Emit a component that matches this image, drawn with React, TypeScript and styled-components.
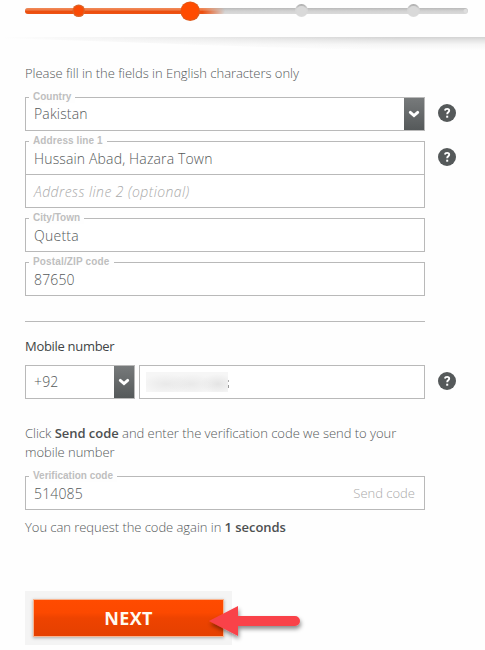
import React from "react";
import styled, { createGlobalStyle } from "styled-components";

const GlobalStyle = createGlobalStyle`
  *, *::before, *::after { box-sizing: border-box; }
  body {
    margin: 0;
    background: #fefefe;
    color: #55595a;
    font-family: "Open Sans", "Noto Sans", sans-serif;
    font-size: 13px;
    font-weight: 300;
  }
`;

const Page = styled.main`
  width: 485px;
  height: 650px;
  overflow: hidden;
`;

const Header = styled.header`
  height: 63px;
  svg { display: block; }
`;

const Form = styled.form`
  display: flex;
  flex-direction: column;
  padding-left: 25px;
`;

const Line = styled.p<{ $top?: number; $spacing?: number }>`
  margin: ${(p) => p.$top ?? 0}px 0 0;
  height: 20px;
  line-height: 20px;
  white-space: nowrap;
  letter-spacing: ${(p) => p.$spacing ?? -0.03}px;
  strong { font-weight: 600; color: #4d5051; }
`;

const SubHeading = styled.h2`
  margin: 14px 0 0;
  height: 20px;
  font-size: 13px;
  line-height: 20px;
  font-weight: 400;
  letter-spacing: -0.3px;
  color: #414546;
`;

const Row = styled.div<{ $top: number }>`
  display: flex;
  align-items: flex-start;
  margin-top: ${(p) => p.$top}px;
`;

const Box = styled.div<{ $width?: number }>`
  position: relative;
  display: flex;
  align-items: center;
  width: ${(p) => p.$width ?? 400}px;
  height: 34px;
  padding-left: 8px;
  border: 1px solid #b9b9b9;
  background: #fff;
  & + & { margin-left: 4px; }
`;

const Stack = styled.div`
  ${Box} + ${Box} { margin: -1px 0 0; }
`;

const Legend = styled.label<{ $spacing?: number }>`
  position: absolute;
  top: -8px;
  left: 3px;
  padding: 0 4px;
  background: #fefefe;
  font: 700 10px/13px "Liberation Sans", Arial, sans-serif;
  letter-spacing: ${(p) => p.$spacing ?? 0}px;
  color: #bfbfbf;
  white-space: nowrap;
`;

const Value = styled.span<{ $spacing?: number; $shift?: number }>`
  flex: 1;
  font-size: 14px;
  line-height: 20px;
  padding-top: ${(p) => p.$shift ?? 1}px;
  letter-spacing: ${(p) => p.$spacing ?? 0.15}px;
  white-space: nowrap;
`;

const Placeholder = styled(Value)`
  font-style: italic;
  color: #aaa;
`;

const DropButton = styled.span`
  display: flex;
  align-items: center;
  justify-content: center;
  width: 20px;
  height: 32px;
  background: linear-gradient(#777a7b, #55595a);
`;

const HelpButton = styled.span`
  display: flex;
  width: 18px;
  height: 18px;
  margin: 7px 0 0 13px;
`;

const SendCode = styled.span`
  padding-right: 9px;
  font-size: 13px;
  color: #aaa;
`;

const Redaction = styled.span`
  display: flex;
  align-items: center;
  justify-content: flex-end;
  width: 82px;
  height: 20px;
  margin-left: -2px;
  background:
    radial-gradient(ellipse 24px 10px at 20px 12px, #e9e9e9, transparent),
    radial-gradient(ellipse 24px 10px at 45px 12px, #e9e9e9, transparent),
    radial-gradient(ellipse 18px 10px at 72px 12px, #e4e4e4, transparent),
    #f6f6f6;
`;

const DigitEdge = styled.span`
  width: 1px;
  height: 8px;
  margin: 3px -1px 0 0;
  background: linear-gradient(#aaa 2px, transparent 2px 5px, #999 5px);
`;

const Divider = styled.hr`
  width: 400px;
  height: 1px;
  margin: 25px 0 0;
  border: 0;
  background: #b9b9b9;
`;

const Action = styled.div`
  position: relative;
  width: 207px;
  height: 54px;
  margin-top: 54px;
  padding: 8px;
  background: #f4f4f4;
`;

const NextButton = styled.button`
  display: block;
  width: 191px;
  height: 38px;
  padding: 0 0 1px;
  border: 1px solid #f9b48f;
  background: linear-gradient(#ff4b00, #fc4900 35%, #ee4300 50%, #e54000);
  box-shadow: 0 1px 3px #aaa;
  color: #fffaf0;
  font: 700 18px/34px "Open Sans", sans-serif;
  letter-spacing: 0.3px;
`;

const Pointer = styled.svg`
  position: absolute;
  left: 182px;
  top: 11px;
`;

function Progress() {
  return (
    <svg width="485" height="56" viewBox="0 0 485 56">
      <defs>
        <linearGradient id="track" x2="0" y2="1">
          <stop offset="0" stopColor="#b9b9b9" />
          <stop offset=".5" stopColor="#d2d2d2" />
          <stop offset="1" stopColor="#dadada" />
        </linearGradient>
        <linearGradient id="done" x2="0" y2="1">
          <stop offset="0" stopColor="#f08a58" />
          <stop offset=".35" stopColor="#ee7742" />
          <stop offset=".6" stopColor="#ec4c0b" />
          <stop offset="1" stopColor="#ee5516" />
        </linearGradient>
        <linearGradient id="fade">
          <stop offset="0" stopColor="#fff" />
          <stop offset=".89" stopColor="#fff" />
          <stop offset="1" stopColor="#000" />
        </linearGradient>
        <mask id="fadeMask"><rect x="20" width="205" height="30" fill="url(#fade)" /></mask>
        <linearGradient id="bump" x2="0" y2="1">
          <stop offset="0" stopColor="#a9a9a9" />
          <stop offset=".35" stopColor="#d4d4d4" />
          <stop offset="1" stopColor="#dcdcdc" />
        </linearGradient>
        <linearGradient id="shade" x2="0" y2="1">
          <stop offset="0" stopColor="#d2d2d2" />
          <stop offset=".2" stopColor="#e3e3e3" />
          <stop offset=".5" stopColor="#f5f5f5" />
          <stop offset=".9" stopColor="#fefefe" />
        </linearGradient>
        <linearGradient id="cover">
          <stop offset="0" stopColor="#fefefe" />
          <stop offset="1" stopColor="#fefefe" stopOpacity="0" />
        </linearGradient>
      </defs>
      <path d="M0 37H485V52Q300 49 150 43L0 38Z" fill="url(#shade)" />
      <rect y="36" width="400" height="18" fill="url(#cover)" />
      <rect x="25" y="8" width="443" height="6" rx="3" fill="url(#track)" />
      <rect x="25" y="8" width="200" height="6" rx="3" fill="url(#done)" mask="url(#fadeMask)" />
      <circle cx="78.7" cy="10.7" r="6.3" fill="#dc6428" />
      <circle cx="78.7" cy="10.7" r="5" fill="#fa4a05" />
      <circle cx="190.2" cy="11.2" r="9.8" fill="#df5a1b" />
      <circle cx="190" cy="11" r="8.8" fill="#ff4b00" />
      <circle cx="301.5" cy="10.5" r="6.5" fill="url(#bump)" />
      <circle cx="301.5" cy="11" r="5" fill="#d9d9d9" />
      <circle cx="413.5" cy="10.5" r="6.5" fill="url(#bump)" />
      <circle cx="413.5" cy="11" r="5" fill="#d9d9d9" />
      <circle cx="465.5" cy="11" r="2" fill="#dedede" />
    </svg>
  );
}

function Drop() {
  return (
    <DropButton>
      <svg width="12" height="8" viewBox="0 0 12 8">
        <path d="M2.3 2.4L6 5.6L9.7 2.4" fill="none" stroke="#fff" strokeWidth="2.9" strokeLinecap="round" />
      </svg>
    </DropButton>
  );
}

function Help() {
  return (
    <HelpButton>
      <svg width="18" height="18" viewBox="0 0 18 18">
        <circle cx="9" cy="9" r="9" fill="#55595a" />
        <path d="M6.8 6.4Q7.2 4.9 9.1 4.9Q11.2 4.9 11.2 6.6Q11.2 7.7 10.1 8.3Q9.2 8.8 9.2 10.2" fill="none" stroke="#fff" strokeWidth="1.9" />
        <rect x="8.2" y="11.7" width="2" height="2" fill="#fff" />
      </svg>
    </HelpButton>
  );
}

export default function App() {
  return (
    <>
      <GlobalStyle />
      <Page>
        <Header><Progress /></Header>
        <Form>
          <Line>Please fill in the fields in English characters only</Line>
          <Row $top={14}>
            <Box>
              <Legend>Country</Legend>
              <Value $shift={0}>Pakistan</Value>
              <Drop />
            </Box>
            <Help />
          </Row>
          <Row $top={10}>
            <Stack>
              <Box>
                <Legend $spacing={0.1}>Address line 1</Legend>
                <Value>Hussain Abad, Hazara Town</Value>
              </Box>
              <Box><Placeholder $spacing={0.42}>Address line 2 (optional)</Placeholder></Box>
            </Stack>
            <Help />
          </Row>
          <Row $top={10}>
            <Box>
              <Legend>City/Town</Legend>
              <Value $spacing={0.25}>Quetta</Value>
            </Box>
          </Row>
          <Row $top={10}>
            <Box>
              <Legend $spacing={0.15}>Postal/ZIP code</Legend>
              <Value>87650</Value>
            </Box>
          </Row>
          <Divider />
          <SubHeading>Mobile number</SubHeading>
          <Row $top={9}>
            <Box $width={110}>
              <Value $shift={0}>+92</Value>
              <Drop />
            </Box>
            <Box $width={286}>
              <Redaction><DigitEdge /></Redaction>
            </Box>
            <Help />
          </Row>
          <Line $top={24}>Click <strong>Send code</strong> and enter the verification code we send to your</Line>
          <Line $top={-1}>mobile number</Line>
          <Row $top={14}>
            <Box>
              <Legend>Verification code</Legend>
              <Value>514085</Value>
              <SendCode>Send code</SendCode>
            </Box>
          </Row>
          <Line $top={7} $spacing={-0.05}>You can request the code again in <strong>1 seconds</strong></Line>
          <Action>
            <NextButton type="button">NEXT</NextButton>
            <Pointer width="100" height="42" viewBox="0 0 100 42">
              <defs>
                <filter id="drop" x="-20%" y="-20%" width="140%" height="160%">
                  <feDropShadow dx="1" dy="3" stdDeviation="2" floodColor="#000" floodOpacity=".45" />
                </filter>
              </defs>
              <path d="M2 19L31 4V14H88A5 5 0 0 1 88 24H31V34Z" fill="#f9434a" filter="url(#drop)" />
            </Pointer>
          </Action>
        </Form>
      </Page>
    </>
  );
}
